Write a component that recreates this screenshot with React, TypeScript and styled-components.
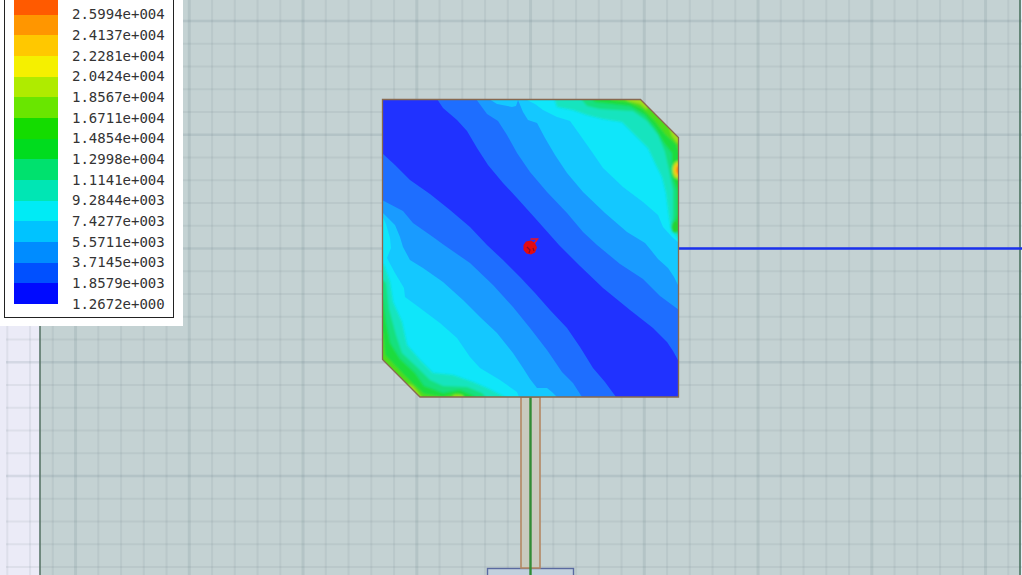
import React from "react";
import styled, { createGlobalStyle } from "styled-components";

const GlobalStyle = createGlobalStyle`
  * { box-sizing: border-box; }
  body { margin: 0; background: #ebebf7; overflow: hidden; }
`;

const Viewport = styled.main`
  display: grid;
  grid-template: 100vh / 1fr;
  align-items: start;
  justify-items: start;
`;

const Scene = styled.svg`
  grid-area: 1 / 1;
  display: block;
  width: 100%;
  height: 100%;
`;

const LegendPanel = styled.aside`
  grid-area: 1 / 1;
  z-index: 1;
  padding: 0 9px 8px 4px;
  background: #fff;
`;

const LegendFrame = styled.div`
  display: flex;
  gap: 14px;
  padding: 0 8px 0 9px;
  height: 318px;
  overflow: hidden;
  border: solid #222;
  border-width: 0 1px 1px;
`;

const ColorScale = styled.div`
  display: flex;
  flex-direction: column;
  width: 44px;
  height: 310px;
  margin-top: -6px;
`;

const Swatch = styled.div<{ $color: string }>`
  flex: 1;
  background: ${(p) => p.$color};
`;

const ValueList = styled.ol`
  display: flex;
  flex-direction: column;
  height: 310px;
  margin: 4px 0 0;
  padding: 0;
  list-style: none;
`;

const Value = styled.li`
  flex: 1;
  display: flex;
  align-items: center;
  color: #333;
  font: 14px/20px "DejaVu Sans Mono", monospace;
`;

const scale = [
  { value: "2.5994e+004", color: "#ff5a00" },
  { value: "2.4137e+004", color: "#ff9600" },
  { value: "2.2281e+004", color: "#ffc800" },
  { value: "2.0424e+004", color: "#f5f000" },
  { value: "1.8567e+004", color: "#afeb00" },
  { value: "1.6711e+004", color: "#69e600" },
  { value: "1.4854e+004", color: "#14dc00" },
  { value: "1.2998e+004", color: "#00dc1e" },
  { value: "1.1141e+004", color: "#00e16e" },
  { value: "9.2844e+003", color: "#00e6b4" },
  { value: "7.4277e+003", color: "#00ebf5" },
  { value: "5.5711e+003", color: "#00c3ff" },
  { value: "3.7145e+003", color: "#008cff" },
  { value: "1.8579e+003", color: "#0050ff" },
  { value: "1.2672e+000", color: "#000aff" },
];

// Field magnitude bands, lowest first; each band is painted over the one before.
const bands = [
  {
    color: "#1e6eff",
    shapes: [
      "437,99 443,108 457,120 467,131 477,148 488,165 503,183 517,198 535,218 559,245 580,266 603,288 630,310 653,328 667,342 673,351 679,362 679,99",
      "382,153 395,165 410,180 430,194 450,210 470,227 487,245 503,260 520,277 535,293 550,310 567,328 580,347 593,368 605,382 616,397 382,397",
    ],
  },
  {
    color: "#199bff",
    shapes: [
      "476,99 487,114 498,121 507,135 517,153 530,172 547,192 567,213 583,232 597,245 620,264 643,279 660,296 679,310 679,99",
      "382,200 403,211 413,223 433,237 444,245 470,263 493,285 513,307 530,328 547,350 562,372 573,383 582,397 382,397",
    ],
  },
  {
    color: "#14c8ff",
    shapes: [
      "489,99 497,104 512,107 516,106 518,100 523,112 528,120 537,123 545,138 555,155 567,173 583,192 605,213 627,232 645,243 650,249 658,259 668,268 674,277 679,287 679,99",
      "382,212 395,225 400,237 403,247 410,260 423,268 443,282 463,300 480,317 497,333 513,353 523,368 530,379 537,388 547,388 552,392 557,397 382,397",
    ],
  },
  {
    color: "#0fe6fa",
    shapes: [
      "525,99 535,104 543,110 557,117 570,121 580,135 592,152 603,168 623,187 643,202 658,215 663,227 672,237 679,243 679,99",
      "382,215 386,224 390,238 391,248 387,258 395,273 404,288 405,297 420,308 440,323 457,338 470,357 480,368 500,380 517,392 519,397 382,397",
    ],
  },
];

const hotBands = [
  {
    color: "#14e4be",
    shapes: [
      "553,94 557,107 573,110 587,115 603,119 622,122 633,133 648,148 655,163 662,177 666,193 669,217 671,229 678,238 690,242 690,94",
      "376,262 384,265 390,282 393,302 402,322 407,345 420,360 433,373 453,375 473,382 487,388 507,398 507,405 376,405",
    ],
  },
  {
    color: "#14e07d",
    shapes: [
      "577,94 587,106 600,109 633,111 647,121 658,135 665,152 669,170 673,190 673,216 672,230 682,236 690,94",
      "376,274 386,283 389,309 396,335 402,353 418,368 430,380 443,386 467,387 482,393 490,402 376,405",
    ],
  },
  {
    color: "#1edc3c",
    shapes: [
      "588,94 595,102 612,104 630,106 645,115 656,129 664,143 672,153 672,176 677,190 677,215 673,229 682,233 690,94",
      "376,290 383,300 386,322 390,343 400,359 415,373 424,386 443,393 460,390 474,396 480,405 376,405",
    ],
  },
  {
    color: "#50dc1e",
    shapes: [
      "606,94 612,100 628,102 643,109 655,121 666,135 676,144 680,154 690,94",
      "376,325 383,334 385,355 400,371 413,384 424,394 443,397 458,393 467,400 376,405",
    ],
  },
  {
    color: "#a0dc1e",
    shapes: [
      "619,94 628,101 640,104 647,110 648,100",
      "668,124 672,136 677,143 690,145 690,124",
      "408,384 413,386 422,398 406,405",
      "451,399 454,395 462,395 465,399",
    ],
  },
];

const PATCH = "382.5,99.5 640.5,99.5 678.5,137.5 678.5,397 420,397 382.5,359.5";

const gridLines = (origin: number, count: number) =>
  Array.from({ length: count }, (_, i) => ({ at: origin + (i * 455) / 20, major: i % 5 === 0 }));

const columns = gridLines(-38.2, 47);
const rows = gridLines(21 - 113.75, 31);

function FieldPlot() {
  return (
    <Scene viewBox="0 0 1022 575" preserveAspectRatio="xMinYMin slice" role="img" aria-label="Field magnitude on a patch antenna">
      <defs>
        <clipPath id="patch"><polygon points={PATCH} /></clipPath>
        <filter id="soften"><feGaussianBlur stdDeviation="1.3" /></filter>
      </defs>
      <rect width="1022" height="575" fill="#ebebf7" />
      <rect x="40" width="981" height="575" fill="#c4d2d3" />
      <g stroke="#5f7880">
        {columns.map((c) => (
          <line key={c.at} x1={c.at} x2={c.at} y1="0" y2="575" strokeWidth={c.major ? 3 : 2} strokeOpacity={c.major ? 0.15 : 0.1} />
        ))}
        {rows.map((r) => (
          <line key={r.at} x1="6" x2="1022" y1={r.at} y2={r.at} strokeWidth={r.major ? 2.6 : 2} strokeOpacity={r.major ? 0.16 : 0.1} />
        ))}
      </g>
      <path d="M40 0V575" stroke="#587568" strokeWidth="1.6" />
      <path d="M1020 0V575" stroke="#456c59" strokeWidth="1.5" />

      <rect x="487.5" y="568.5" width="86" height="12" fill="#c2d0dd" stroke="#5a6aa0" strokeWidth="1.4" />
      <rect x="521" y="397" width="19" height="171" fill="#c9cabf" stroke="#b48763" strokeWidth="1.6" />
      <path d="M530.5 397V575" stroke="#318c35" strokeWidth="2.4" />
      <path d="M679 248.5H1022" stroke="#1b31ed" strokeWidth="2.4" />

      <g clipPath="url(#patch)">
        <rect x="382" y="99" width="297" height="298" fill="#2032ff" />
        {bands.map((b) => b.shapes.map((s) => <polygon key={s} points={s} fill={b.color} />))}
        <g filter="url(#soften)">
          {hotBands.map((b) => b.shapes.map((s) => <polygon key={s} points={s} fill={b.color} />))}
          <ellipse cx="675" cy="227" rx="3.5" ry="6" fill="#28d232" />
          <ellipse cx="678" cy="170" rx="5.5" ry="9" fill="#b9e11e" />
          <ellipse cx="678" cy="170" rx="4" ry="6.5" fill="#ffc31e" />
          <ellipse cx="679" cy="170" rx="2.5" ry="4" fill="#ff7814" />
        </g>
      </g>
      <polygon points={PATCH} fill="none" stroke="#88694f" strokeWidth="1.3" />

      <path d="M523.5 245L526 241.5L531 240.5L535 243L537 247.5L535 252.5L531 254.5L526.5 253.5L523.5 250Z" fill="#e20b12" />
      <path d="M530.5 239H537.5L534.5 243" fill="none" stroke="#f01420" strokeWidth="1.5" />
      <path d="M527 247L530 250L529 253M533 248L534 251" fill="none" stroke="#8c0a28" strokeWidth="1.2" />
    </Scene>
  );
}

export default function App() {
  return (
    <>
      <GlobalStyle />
      <Viewport>
        <FieldPlot />
        <LegendPanel aria-label="Field magnitude scale">
          <LegendFrame>
            <ColorScale>
              {scale.map((s) => <Swatch key={s.value} $color={s.color} />)}
            </ColorScale>
            <ValueList>
              {scale.map((s) => <Value key={s.value}>{s.value}</Value>)}
            </ValueList>
          </LegendFrame>
        </LegendPanel>
      </Viewport>
    </>
  );
}
